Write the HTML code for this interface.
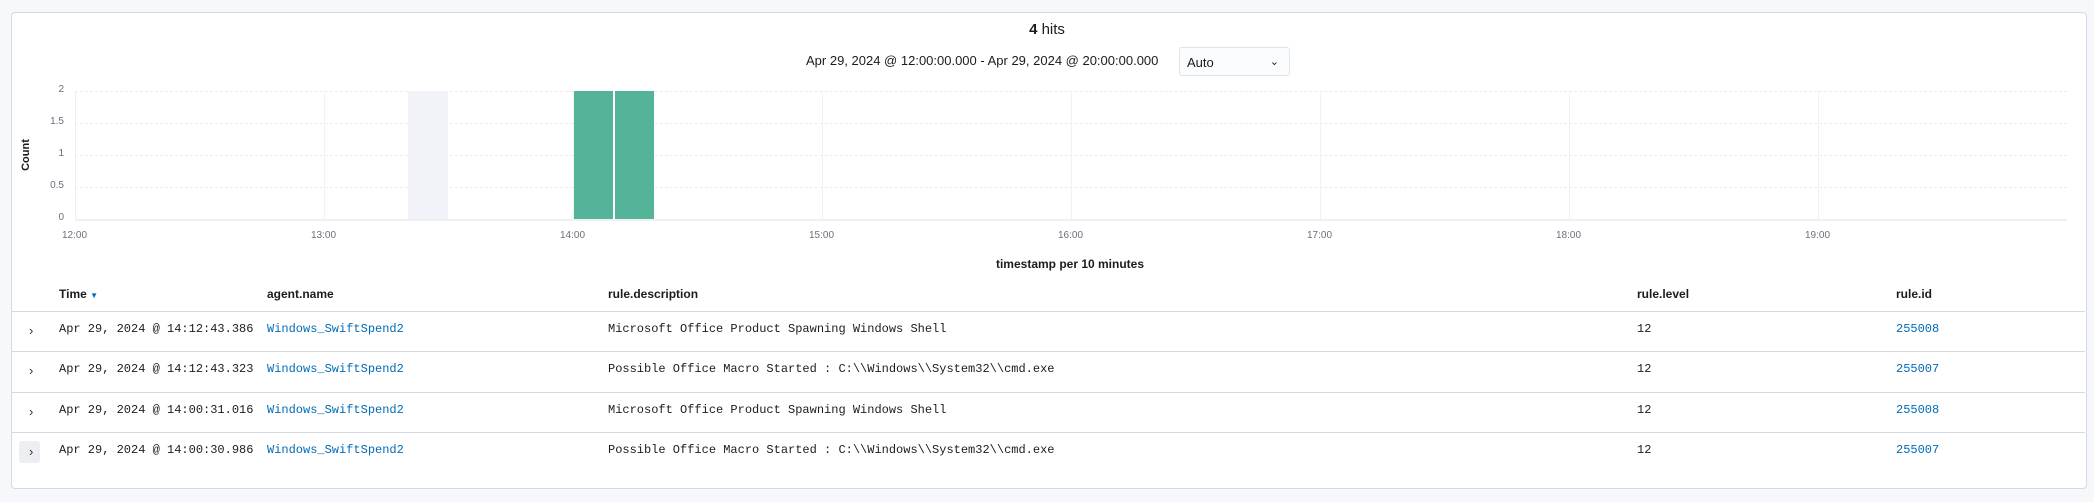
<!DOCTYPE html>
<html><head><meta charset="utf-8"><style>
body{margin:0;width:2094px;height:502px;background:#f7f8fc;font-family:"Liberation Sans",sans-serif;position:relative;overflow:hidden;color:#1a1c21}
.panel{position:absolute;left:11px;top:12px;width:2074px;height:475px;background:#fff;border:1px solid #d3dae6;border-radius:4px}
.a{position:absolute;white-space:nowrap}
.yl{position:absolute;font-size:10px;color:#69707d;right:2030px}
.xl{position:absolute;font-size:10px;color:#69707d;top:230px}
.grid{position:absolute;left:75px;width:1992px;border-top:1px dashed #e9ecf1}
.vg{position:absolute;top:91px;height:128px;border-left:1px solid #f0f2f5}
.h{position:absolute;top:287px;font-size:12px;font-weight:bold;color:#1a1c21}
.sep{position:absolute;left:12px;width:2073px;border-top:1px solid #d3dae6}
.m{position:absolute;font-family:"Liberation Mono",monospace;font-size:12px;color:#1a1c21;white-space:nowrap}
.lk{color:#006bb8}
.ar{position:absolute;left:29px;font-size:13px;color:#343741}
</style></head><body>
<div class="panel"></div>
<div class="a" style="left:0;width:2094px;text-align:center;top:21px;font-size:15px"><b>4</b> hits</div>
<div class="a" style="left:806px;top:53px;font-size:13px">Apr 29, 2024 @ 12:00:00.000 - Apr 29, 2024 @ 20:00:00.000</div>
<div class="a" style="left:1179px;top:47px;width:111px;height:29px;border:1px solid #dfe3ea;border-radius:3px;background:#fbfcfd;font-size:13px;line-height:29px;box-sizing:border-box;padding-left:7px">Auto<span style="position:absolute;right:10px;top:0;font-size:11px">&#8964;</span></div>
<div class="grid" style="top:91px"></div><div class="grid" style="top:123px"></div><div class="grid" style="top:155px"></div><div class="grid" style="top:187px"></div><div class="grid" style="top:219px;border-top:2px solid #eef0f4"></div>
<div style="position:absolute;left:75px;top:91px;height:128px;border-left:1px solid #eef0f4"></div>
<div class="vg" style="left:324px"></div><div class="vg" style="left:573px"></div><div class="vg" style="left:822px"></div><div class="vg" style="left:1071px"></div><div class="vg" style="left:1320px"></div><div class="vg" style="left:1569px"></div><div class="vg" style="left:1818px"></div>
<div style="position:absolute;left:408px;top:91px;width:40px;height:128px;background:#f1f3f8"></div>
<div style="position:absolute;left:574px;top:91px;width:39px;height:128px;background:#54b399"></div>
<div style="position:absolute;left:615px;top:91px;width:39px;height:128px;background:#54b399"></div>
<div class="yl" style="top:84px">2</div><div class="yl" style="top:116px">1.5</div><div class="yl" style="top:148px">1</div><div class="yl" style="top:180px">0.5</div><div class="yl" style="top:212px">0</div>
<div class="a" style="left:10px;top:149px;font-size:11px;font-weight:bold;transform:rotate(-90deg)">Count</div>
<div class="xl" style="left:62px">12:00</div><div class="xl" style="left:311px">13:00</div><div class="xl" style="left:560px">14:00</div><div class="xl" style="left:809px">15:00</div><div class="xl" style="left:1058px">16:00</div><div class="xl" style="left:1307px">17:00</div><div class="xl" style="left:1556px">18:00</div><div class="xl" style="left:1805px">19:00</div>
<div class="a" style="left:0;width:2140px;text-align:center;top:257px;font-size:12px;font-weight:bold">timestamp per 10 minutes</div>
<div class="h" style="left:59px">Time <span style="color:#006bb8;font-size:8px">&#9660;</span></div>
<div class="h" style="left:267px">agent.name</div>
<div class="h" style="left:608px">rule.description</div>
<div class="h" style="left:1637px">rule.level</div>
<div class="h" style="left:1896px">rule.id</div>
<div class="sep" style="top:311px"></div><div class="sep" style="top:351px"></div><div class="sep" style="top:392px"></div><div class="sep" style="top:432px"></div>
<div style="position:absolute;left:19px;top:441px;width:21px;height:22px;background:#eceef2;border-radius:3px"></div>
<div class="ar" style="top:323px">&#8250;</div><div class="ar" style="top:363px">&#8250;</div><div class="ar" style="top:404px">&#8250;</div><div class="ar" style="top:444px">&#8250;</div>
<div class="m" style="left:59px;top:322px">Apr 29, 2024 @ 14:12:43.386</div><div class="m lk" style="left:267px;top:322px">Windows_SwiftSpend2</div><div class="m" style="left:608px;top:322px">Microsoft Office Product Spawning Windows Shell</div><div class="m" style="left:1637px;top:322px">12</div><div class="m lk" style="left:1896px;top:322px">255008</div>
<div class="m" style="left:59px;top:362px">Apr 29, 2024 @ 14:12:43.323</div><div class="m lk" style="left:267px;top:362px">Windows_SwiftSpend2</div><div class="m" style="left:608px;top:362px">Possible Office Macro Started : C:\\Windows\\System32\\cmd.exe</div><div class="m" style="left:1637px;top:362px">12</div><div class="m lk" style="left:1896px;top:362px">255007</div>
<div class="m" style="left:59px;top:403px">Apr 29, 2024 @ 14:00:31.016</div><div class="m lk" style="left:267px;top:403px">Windows_SwiftSpend2</div><div class="m" style="left:608px;top:403px">Microsoft Office Product Spawning Windows Shell</div><div class="m" style="left:1637px;top:403px">12</div><div class="m lk" style="left:1896px;top:403px">255008</div>
<div class="m" style="left:59px;top:443px">Apr 29, 2024 @ 14:00:30.986</div><div class="m lk" style="left:267px;top:443px">Windows_SwiftSpend2</div><div class="m" style="left:608px;top:443px">Possible Office Macro Started : C:\\Windows\\System32\\cmd.exe</div><div class="m" style="left:1637px;top:443px">12</div><div class="m lk" style="left:1896px;top:443px">255007</div>
</body></html>
